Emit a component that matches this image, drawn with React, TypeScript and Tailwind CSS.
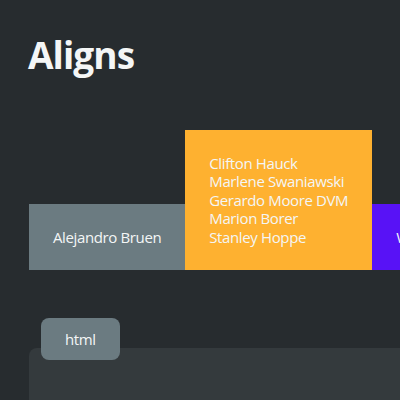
import React from "react";

const names = [
  "Clifton Hauck",
  "Marlene Swaniawski",
  "Gerardo Moore DVM",
  "Marion Borer",
  "Stanley Hoppe",
];

export default function App() {
  return (
    <div className="h-screen w-full overflow-hidden bg-[#272c2f] font-['Open_Sans',sans-serif] text-[#f4f6f6]">
      <div className="pl-[28px] pt-[36px]">
        <h1 className="text-[37px] font-bold leading-none tracking-tight">Aligns</h1>

        <div className="ml-px mt-[57px] flex items-end text-[15px] leading-[18.4px] tracking-tight">
          <div className="shrink-0 bg-[#6b7b81] p-6">Alejandro Bruen</div>
          <div className="shrink-0 bg-[#feb130] p-6">
            {names.map((n) => (
              <div key={n}>{n}</div>
            ))}
          </div>
          <div className="shrink-0 bg-[#5812f6] p-6">Wilbur Schmitt</div>
        </div>

        <div className="relative ml-px mt-[48px]">
          <div className="relative z-10 ml-3 inline-block rounded-lg bg-[#6b7b81] px-6 py-3 text-[15px] leading-[18.4px] tracking-tight">
            html
          </div>
          <div className="-mt-3 h-40 rounded-tl-lg bg-[#343a3d]" />
        </div>
      </div>
    </div>
  );
}
